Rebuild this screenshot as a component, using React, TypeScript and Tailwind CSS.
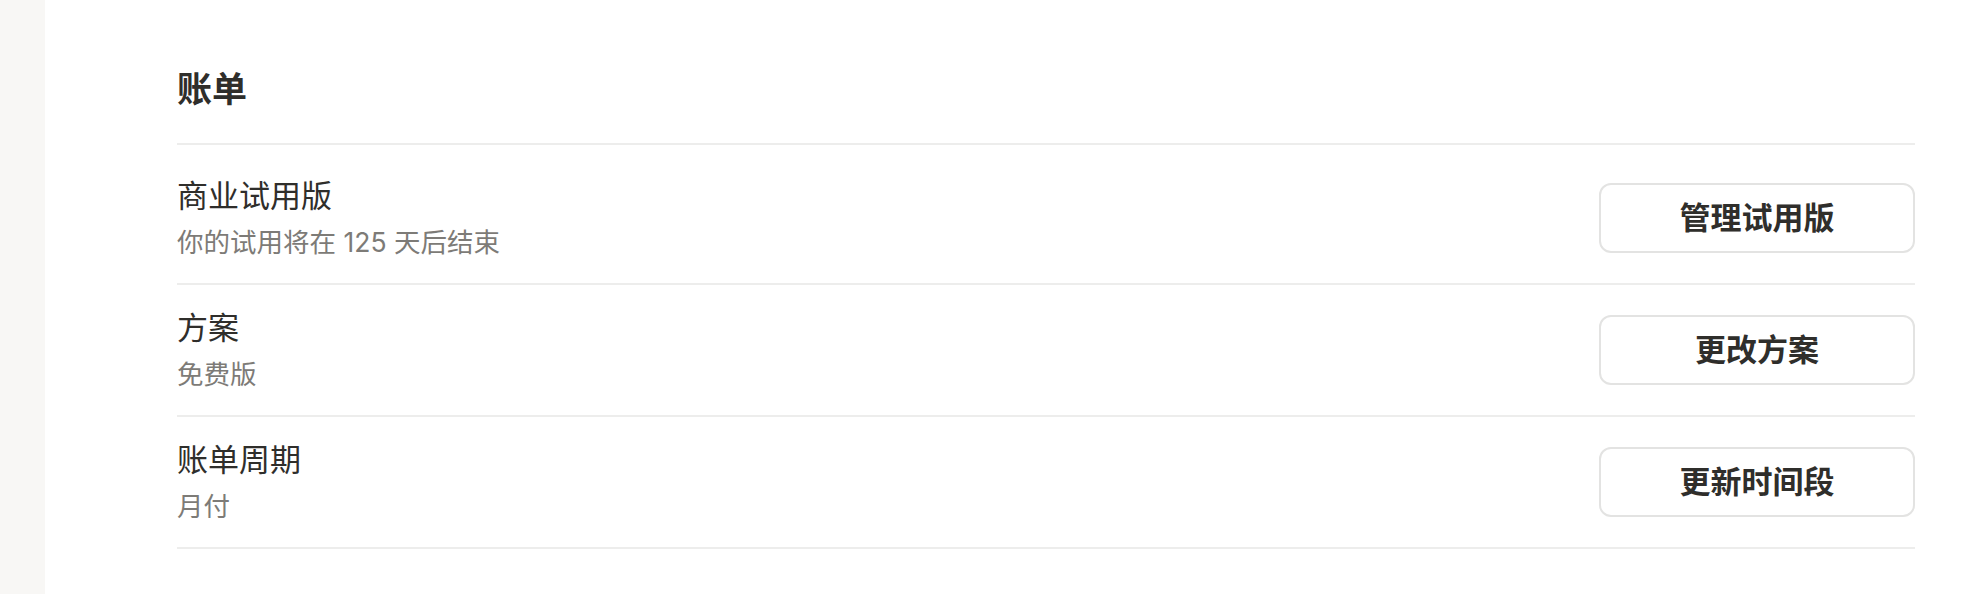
import React from "react";

interface BillingRow {
  title: string;
  detail: string;
  action: string;
}

const rows: BillingRow[] = [
  { title: "商业试用版", detail: "你的试用将在 125 天后结束", action: "管理试用版" },
  { title: "方案", detail: "免费版", action: "更改方案" },
  { title: "账单周期", detail: "月付", action: "更新时间段" },
];

function RowItem({ row, first }: { row: BillingRow; first: boolean }) {
  return (
    <div
      className={`flex items-center justify-between border-b-2 border-[#ededec] ${
        first ? "pt-[31px]" : "pt-[23px]"
      } pb-[23px]`}
    >
      <div className="flex flex-col">
        <div className="text-[31px] leading-[40px] text-[#2f2e2b]">{row.title}</div>
        <div className="mt-[8px] text-[26.5px] leading-[36px] text-[#7d7b77]">{row.detail}</div>
      </div>
      <button
        type="button"
        className="flex h-[70px] w-[316px] items-center justify-center rounded-[12px] border-2 border-[#e3e3e2] bg-white text-[31px] font-semibold text-[#2f2e2b]"
      >
        {row.action}
      </button>
    </div>
  );
}

export default function App() {
  return (
    <div className="flex min-h-screen w-full bg-white font-['Inter','Noto_Sans_CJK_SC',sans-serif]">
      <div className="w-[45px] shrink-0 bg-[#f8f7f5]" />
      <main className="flex-1 pl-[132px] pr-[67px] pt-[69px]">
        <h1 className="border-b-2 border-[#ededec] pb-[34px] text-[35px] font-semibold leading-[40px] text-[#2f2e2b]">
          账单
        </h1>
        {rows.map((row, i) => (
          <RowItem key={row.title} row={row} first={i === 0} />
        ))}
      </main>
    </div>
  );
}
